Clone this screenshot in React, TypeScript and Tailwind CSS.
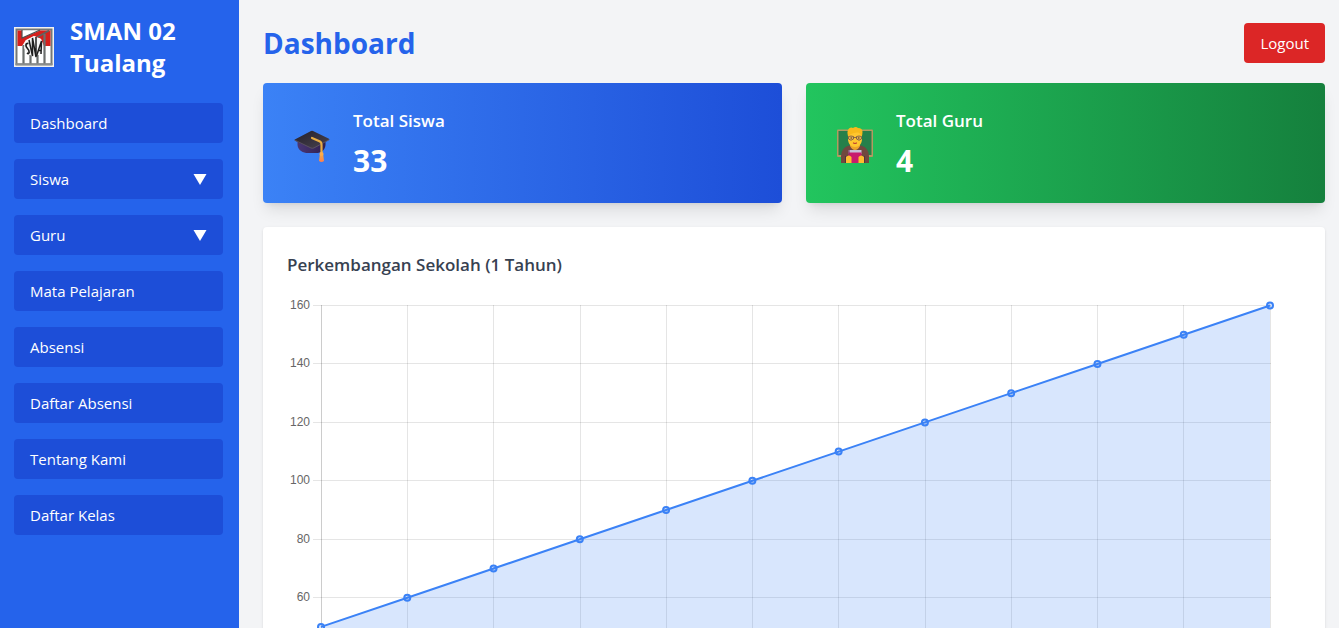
import React from "react";

type NavItem = { label: string; expandable?: boolean };

const navItems: NavItem[] = [
  { label: "Dashboard" },
  { label: "Siswa", expandable: true },
  { label: "Guru", expandable: true },
  { label: "Mata Pelajaran" },
  { label: "Absensi" },
  { label: "Daftar Absensi" },
  { label: "Tentang Kami" },
  { label: "Daftar Kelas" },
];

const months = ["Januari", "Februari", "Maret", "April", "Mei", "Juni", "Juli", "Agustus", "September", "Oktober", "November", "Desember"];
const values = [50, 60, 70, 80, 90, 100, 110, 120, 130, 140, 150, 160];
const ticks = [0, 20, 40, 60, 80, 100, 120, 140, 160];

function SchoolLogo() {
  return (
    <svg viewBox="0 0 40 40" className="size-10 shrink-0" role="img" aria-label="Logo SMAN 02 Tualang">
      <rect width="40" height="40" fill="#f2f2f0" />
      <rect x="1.5" y="1.5" width="37" height="37" fill="#747876" />
      <rect x="3.5" y="3.5" width="33" height="33" fill="#fff" />
      <path d="M3.500 3.500H8V11L26 3.500H36.500V19H30L27 12L20 9L12 13L8 19H3.500Z" fill="#d6201d" />
      <path d="M8.500 3.500H24L8.500 10Z" fill="#fff" />
      <path d="M8 3V11L26 3" fill="none" stroke="#4d5150" strokeWidth="1.200" />
      <path d="M13 16L35 3.500" fill="none" stroke="#5d6261" strokeWidth="1.600" />
      <path d="M9.500 18V37M16.500 28V37M23.500 28V37" stroke="#6c706f" strokeWidth="2.200" />
      <path d="M11 14L20 9L27 12L29.500 20L26 27L20 30L14 27L10 21Z" fill="#f5f5f5" />
      <path d="M14.500 16.500C11 16 11.500 19.500 13.500 21.500C16 24 15.500 28 13 26" fill="none" stroke="#1e1e1e" strokeWidth="1.700" />
      <path d="M15 13L18.500 29L18.500 11L22 30L22 10" fill="none" stroke="#1e1e1e" strokeWidth="1.500" />
      <path d="M22.500 29L27.500 14L27 27M24.500 23.500H27" fill="none" stroke="#1e1e1e" strokeWidth="1.500" />
      <path d="M30.500 7V37" stroke="#6c706f" strokeWidth="2.200" />
      <path d="M1.500 37.200H38.500" stroke="#8b8e8d" strokeWidth="1.800" />
    </svg>
  );
}

function GraduationCap() {
  return (
    <svg viewBox="0 0 36 36" className="size-9" aria-hidden="true">
      <defs>
        <linearGradient id="capTop" x1="0" y1="0" x2="1" y2="1">
          <stop stopColor="#24202b" />
          <stop offset="1" stopColor="#49434f" />
        </linearGradient>
        <linearGradient id="capBase">
          <stop stopColor="#493675" />
          <stop offset="1" stopColor="#30204f" />
        </linearGradient>
        <linearGradient id="tassel" x1="0" y1="0" x2="0" y2="1">
          <stop stopColor="#eeb346" />
          <stop offset="1" stopColor="#ff7e4c" />
        </linearGradient>
      </defs>
      <path d="M3.500 13V18C4 23.500 9 26 14 26H22C27 26 31 23.500 31.500 18V12Z" fill="url(#capBase)" />
      <path d="M.8 12.500L17 4Q18 3.500 19 4L35 11.800Q36 12.500 35 13L20 21.300Q18.300 22 17 21.300L1 13.700Q0 13 .8 12.500Z" fill="url(#capTop)" />
      <path d="M1 13.200L17 21Q18.300 21.600 20 20.900L35 12.800" fill="none" stroke="#665b70" strokeWidth=".7" />
      <path d="M18 11L26 14.500Q27.500 15.300 27.500 17.500V26" fill="none" stroke="#e8ad43" strokeWidth="2.200" strokeLinecap="round" />
      <path d="M26 26H29L30 34Q27.500 36 25 34Z" fill="url(#tassel)" />
      <circle cx="27.500" cy="27" r="2" fill="#ffab48" />
    </svg>
  );
}

function Teacher() {
  return (
    <svg viewBox="0 0 36 36" className="size-9" aria-hidden="true">
      <rect y="2.500" width="36" height="27.500" rx="1" fill="#b39a60" />
      <rect x="1.500" y="4" width="33" height="24" fill="#26804a" />
      <path d="M4 36V29Q4 21 12 18.500H24Q32 21 32 29V36Z" fill="#71483f" />
      <path d="M13 16H23V19Q21 23 18 23T13 19Z" fill="#eea42b" />
      <path d="M11 8Q11 2 18 2T25 8V13Q24 20 18 20T11 13Z" fill="#ffc62f" />
      <path d="M11 9Q9.500 4 12 1.500Q14 0 16 1Q19-.8 21 1Q25.500 1 25.500 5Q25.500 8 24.500 9Q23 5 20 5.500Q14 6 11 9Z" fill="#f8ba1c" />
      <path d="M11.500 9.500Q14 8.500 16.500 9.500V12Q14 14.500 11.500 12ZM19.500 9.500Q22 8.500 24.500 9.500V12Q22 14.500 19.500 12ZM16.500 10.500H19.500" fill="#e3b04a" stroke="#705248" strokeWidth=".8" />
      <circle cx="14.200" cy="11" r=".7" fill="#453540" />
      <circle cx="21.800" cy="11" r=".7" fill="#453540" />
      <path d="M16.500 16Q18 17 19.500 16" fill="none" stroke="#c4472f" strokeWidth="1.200" strokeLinecap="round" />
      <rect x="11.500" y="23" width="13" height="4" fill="#c7c1d7" />
      <rect x="11.500" y="25.500" width="13" height="10.500" fill="#c81b6c" />
      <path d="M12 23V28" stroke="#753464" strokeWidth="1" />
      <path d="M9 36V30Q12 27 14.500 30V36ZM21.500 36V30Q24 27 27 30V36Z" fill="#ffbd2e" />
      <path d="M8.500 29V36M27.500 29V36" stroke="#51343a" strokeWidth="1" />
    </svg>
  );
}

function StatCard({ label, value, tone, icon }: { label: string; value: number; tone: string; icon: React.ReactNode }) {
  return (
    <section className={`flex items-center gap-[23px] rounded p-6 text-white shadow-lg ${tone}`}>
      <div className="shrink-0 pt-1 pl-[7px]">{icon}</div>
      <div>
        <h2 className="text-[17px] leading-7 font-semibold">{label}</h2>
        <p className="mt-2 text-3xl leading-9 font-bold">{value}</p>
      </div>
    </section>
  );
}

function GrowthChart() {
  const left = 34;
  const right = 983;
  const top = 10.5;
  const bottom = 478;
  const xAt = (i: number) => left + (i * (right - left)) / 11;
  const yAt = (v: number) => bottom - (v * (bottom - top)) / 160;
  const line = values.map((v, i) => `${xAt(i)},${yAt(v)}`).join(" ");
  return (
    <svg viewBox="0 0 1014 507" className="block h-auto w-full font-['Liberation_Sans',Arial,sans-serif] text-[12px]" role="img" aria-label="Perkembangan Sekolah (1 Tahun)">
      {ticks.map((t) => {
        const y = Math.floor(yAt(t)) + 0.5;
        return (
          <g key={t}>
            <path d={`M26 ${y}H984`} stroke="#000" strokeOpacity="0.1" />
            <text x="23" y={y + 3.5} textAnchor="end" fill="#666">{t}</text>
          </g>
        );
      })}
      {months.map((m, i) => {
        const x = Math.floor(xAt(i) + 0.2) + 0.5;
        return (
          <g key={m}>
            <path d={`M${x} 10V486`} stroke="#000" strokeOpacity={i === 0 ? 0.2 : 0.1} />
            <text x={x} y="500" textAnchor="middle" fill="#666">{m}</text>
          </g>
        );
      })}
      <polygon points={`${left},${bottom} ${line} ${right},${bottom}`} fill="#3b82f6" fillOpacity="0.2" />
      <polyline points={line} fill="none" stroke="#3b82f6" strokeWidth="2" />
      {values.map((v, i) => (
        <circle key={v} cx={xAt(i)} cy={yAt(v)} r="3" fill="#3b82f6" fillOpacity="0.2" stroke="#3b82f6" strokeWidth="2" />
      ))}
    </svg>
  );
}

export default function App() {
  return (
    <div className="flex h-screen bg-[#f3f4f6] font-['Open_Sans','Noto_Sans',sans-serif]">
      <aside className="w-[239px] shrink-0 overflow-y-auto bg-[#2563eb] pt-[15px] pr-4 pl-3.5 text-white">
        <div className="mb-6 flex items-center gap-4">
          <SchoolLogo />
          <p className="text-2xl leading-8 font-bold">SMAN 02 Tualang</p>
        </div>
        <nav>
          <ul className="flex flex-col gap-4">
            {navItems.map((item) => (
              <li key={item.label}>
                {item.expandable ? (
                  <button type="button" className="flex w-full items-center justify-between rounded bg-[#1d4ed8] px-4 py-2 text-[15px] leading-6">
                    {item.label}
                    <svg viewBox="0 0 14 12" className="h-3 w-3.5" aria-hidden="true">
                      <path d="M.5 1H13.500L7 12Z" fill="currentColor" />
                    </svg>
                  </button>
                ) : (
                  <a href="#" className="block rounded bg-[#1d4ed8] px-4 py-2 text-[15px] leading-6">{item.label}</a>
                )}
              </li>
            ))}
          </ul>
        </nav>
      </aside>
      <main className="min-w-0 flex-1 overflow-y-auto pt-[23px] pr-3.5 pb-6 pl-6">
        <header className="mb-5 flex items-center justify-between">
          <h1 className="text-[28px] leading-9 font-bold text-[#2563eb]">Dashboard</h1>
          <button type="button" className="rounded bg-[#dc2626] px-4 py-2 text-[15px] leading-6 text-white">Logout</button>
        </header>
        <div className="mb-6 grid grid-cols-2 gap-6">
          <StatCard label="Total Siswa" value={33} tone="bg-linear-to-r/srgb from-[#3b82f6] to-[#1d4ed8]" icon={<GraduationCap />} />
          <StatCard label="Total Guru" value={4} tone="bg-linear-to-r/srgb from-[#22c55e] to-[#15803d]" icon={<Teacher />} />
        </div>
        <section className="rounded bg-white p-6 shadow">
          <h2 className="mb-4 text-[17px] leading-7 font-semibold text-[#374151]">Perkembangan Sekolah (1 Tahun)</h2>
          <GrowthChart />
        </section>
      </main>
    </div>
  );
}
